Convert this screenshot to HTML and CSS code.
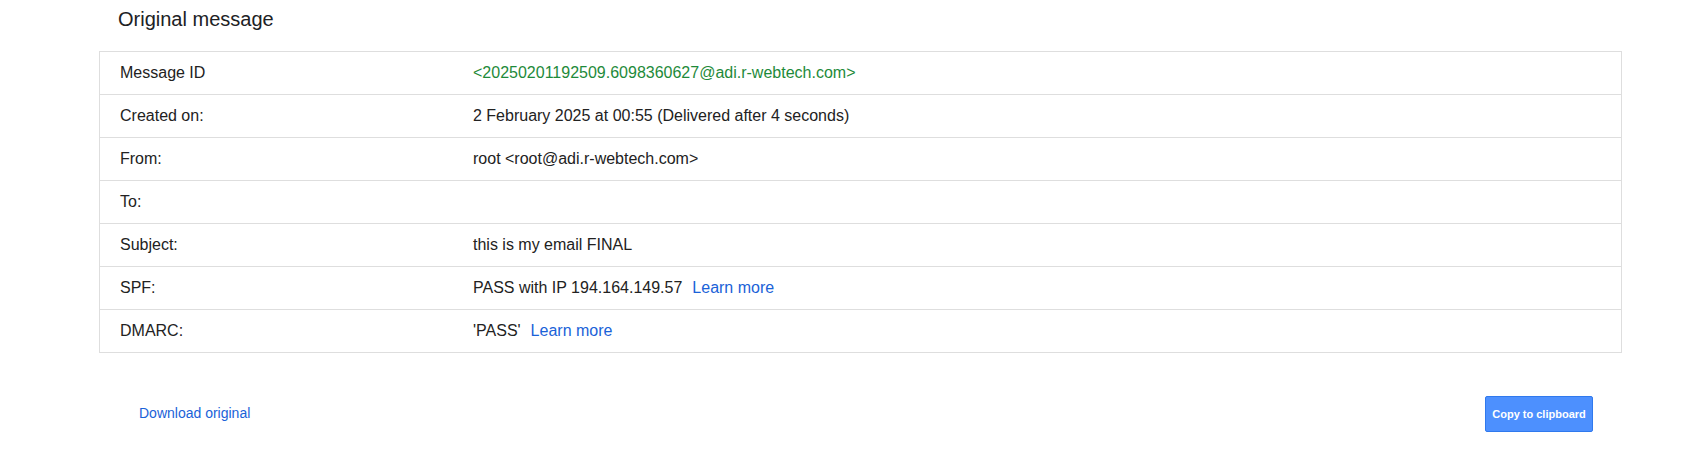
FILE: index.html
```html
<!DOCTYPE html>
<html lang="en">
<head>
<meta charset="utf-8">
<title>Original message</title>
<link rel="stylesheet" href="styles.css">
</head>
<body>
<div class="page">
  <h1 class="title">Original message</h1>
  <div class="details">
    <div class="row"><div class="label">Message ID</div><div class="value msgid">&lt;20250201192509.6098360627@adi.r-webtech.com&gt;</div></div>
    <div class="row"><div class="label">Created on:</div><div class="value">2 February 2025 at 00:55 (Delivered after 4 seconds)</div></div>
    <div class="row"><div class="label">From:</div><div class="value">root &lt;root@adi.r-webtech.com&gt;</div></div>
    <div class="row"><div class="label">To:</div><div class="value"></div></div>
    <div class="row"><div class="label">Subject:</div><div class="value">this is my email FINAL</div></div>
    <div class="row"><div class="label">SPF:</div><div class="value">PASS with IP 194.164.149.57<a class="learn" href="#">Learn more</a></div></div>
    <div class="row"><div class="label">DMARC:</div><div class="value">'PASS'<a class="learn" href="#">Learn more</a></div></div>
  </div>
  <div class="footer">
    <a class="download" href="#">Download original</a>
    <button class="copy" type="button">Copy to clipboard</button>
  </div>
</div>
</body>
</html>
```

FILE: styles.css
```css
html, body {
  margin: 0;
  padding: 0;
  background: #ffffff;
}

body {
  font-family: Arial, "Liberation Sans", sans-serif;
  color: #222222;
}

.page {
  margin-left: 99px;
  width: 1523px;
}

.title {
  margin: 0;
  padding: 8px 0 0 19px;
  font-size: 20px;
  line-height: 23px;
  font-weight: normal;
  color: #202124;
}

.details {
  margin-top: 20px;
  border: 1px solid #dedede;
}

.row {
  display: flex;
  align-items: center;
  height: 42px;
  border-bottom: 1px solid #dedede;
  font-size: 16px;
  line-height: 18px;
}

.row:last-child {
  border-bottom: none;
}

.label {
  flex: 0 0 353px;
  padding-left: 20px;
  color: #222222;
}

.value {
  flex: 1;
  color: #222222;
}

.msgid {
  color: #1e8a3a;
}

.learn {
  margin-left: 10px;
  color: #1a62d8;
  text-decoration: none;
}

.footer {
  display: flex;
  align-items: center;
  justify-content: space-between;
  margin-top: 43px;
  padding: 0 29px 0 40px;
  height: 36px;
}

.download {
  font-size: 14px;
  color: #1a62d8;
  text-decoration: none;
  margin-top: -2px;
}

.copy {
  width: 108px;
  height: 36px;
  padding: 0;
  border: 1px solid #3079ed;
  border-radius: 2px;
  background: #4d90fe;
  color: #ffffff;
  font-family: Arial, "Liberation Sans", sans-serif;
  font-size: 11px;
  font-weight: bold;
  text-align: center;
  cursor: pointer;
}
```
